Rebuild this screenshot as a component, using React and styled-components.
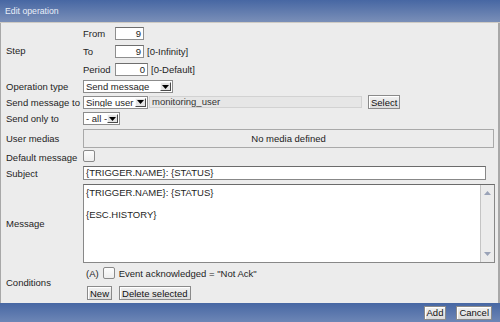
import React from 'react';
import styled, { createGlobalStyle } from 'styled-components';

const Global = createGlobalStyle`
  html, body { margin: 0; padding: 0; background: #ececec; }
  body { font-family: "Liberation Sans", Arial, sans-serif; font-size: 9.5px; color: #1e1e1e; }
`;

const Dialog = styled.div`
  width: 500px;
  height: 322px;
  display: flex;
  flex-direction: column;
  overflow: hidden;
`;

const Header = styled.div`
  height: 22px;
  flex: none;
  display: flex;
  align-items: center;
  padding-left: 5px;
  color: #e9eef8;
  font-size: 8.7px;
  background: linear-gradient(#4767a3, #7a8fb8);
  border-bottom: 1px solid #cfcbc4;
`;

const Body = styled.div`
  flex: 1;
  min-height: 0;
  display: grid;
  grid-template-columns: 82px 1fr;
  align-content: start;
  border-left: 1px solid #a8a8a8;
  border-right: 2px solid #a8a8a8;
  background: #ececec;
`;

const Label = styled.div`
  display: flex;
  align-items: center;
  padding-left: 5px;
  white-space: nowrap;
`;

const Cell = styled.div`
  display: flex;
  align-items: center;
  gap: ${p => p.$gap ?? 3}px;
  padding: ${p => p.$pad ?? '2px 0'};
`;

const StepGrid = styled.div`
  display: grid;
  grid-template-columns: 32px auto;
  grid-auto-rows: 18px;
  align-items: center;
  padding-top: 1px;
`;

const StepItem = styled.div`
  display: flex;
  align-items: center;
  gap: 3px;
`;

const NumInput = styled.div`
  box-sizing: border-box;
  width: ${p => p.$w}px;
  height: 13px;
  border: 1px solid #8e8e8e;
  border-top-color: #6e6e6e;
  background: #fff;
  text-align: right;
  padding-right: 2px;
  line-height: 11px;
`;

const SelectBox = styled.div`
  box-sizing: border-box;
  width: ${p => p.$w}px;
  height: 13px;
  display: flex;
  padding: 1px 1px 1px 0;
  border: 1px solid #8c8c8c;
  background: #fff;
`;

const SelectText = styled.span`
  flex: 1;
  padding-left: 2px;
  line-height: 9px;
  white-space: nowrap;
  overflow: hidden;
`;

const SelectArrow = styled.span`
  box-sizing: border-box;
  width: 11px;
  background: #e4e4e4;
  border: 1px solid;
  border-color: #fafafa #4a4a4a #4a4a4a #fafafa;
  display: flex;
  align-items: center;
  justify-content: center;
`;

const Disabled = styled.div`
  box-sizing: border-box;
  width: 213px;
  height: 12px;
  border: 1px solid #d2d2d2;
  background: #e6e6e6;
  color: #333;
  padding-left: 2px;
  line-height: 10px;
`;

const Button = styled.button`
  box-sizing: border-box;
  height: 14px;
  padding: 0 2px;
  font-family: inherit;
  font-size: 9.5px;
  color: #111;
  background: linear-gradient(#f2f2f2, #dcdcdc);
  border: 1px solid #8a8a8a;
  box-shadow: inset 1px 1px 0 #fff;
  border-radius: 0;
  line-height: 11px;
`;

const MediaBox = styled.div`
  box-sizing: border-box;
  width: 411px;
  height: 19px;
  border: 1px solid #a9a9a9;
  display: flex;
  align-items: center;
  justify-content: center;
  color: #222;
`;

const Check = styled.span`
  box-sizing: border-box;
  width: 12px;
  height: 12px;
  border: 1px solid #8a8a8a;
  border-radius: 2px;
  background: linear-gradient(#fdfdfd, #eeeeee);
  display: inline-block;
`;

const TextInput = styled.div`
  box-sizing: border-box;
  width: 403px;
  height: 14px;
  border: 1px solid #888;
  border-top-color: #6b6b6b;
  background: #fff;
  padding-left: 2px;
  line-height: 12px;
`;

const TextArea = styled.div`
  box-sizing: border-box;
  width: 412px;
  height: 79px;
  border: 1px solid #888;
  border-top-color: #6b6b6b;
  background: #fff;
  display: flex;
`;

const AreaText = styled.div`
  flex: 1;
  padding: 2px 2px;
  line-height: 11px;
`;

const Scrollbar = styled.div`
  width: 13px;
  background: #ececec;
  border-left: 1px solid #c4c4c4;
  display: flex;
  flex-direction: column;
  justify-content: space-between;
  align-items: center;
  padding: 6px 0 6px;
`;

const CondWrap = styled.div`
  display: flex;
  flex-direction: column;
  gap: 7px;
  padding: 2px 0 0 3px;
`;

const CondLine = styled.div`
  display: flex;
  align-items: center;
  gap: 4px;
`;

const ButtonRow = styled.div`
  display: flex;
  gap: 7px;
  padding-left: 1px;
`;

const Footer = styled.div`
  height: 19px;
  flex: none;
  display: flex;
  justify-content: flex-end;
  align-items: center;
  gap: 10px;
  padding-right: 8px;
  background: linear-gradient(#4767a3, #6d86b6);
`;

const Arrow = () => (
  <svg width="7" height="4" viewBox="0 0 7 4"><path d="M0 0h7L3.5 4z" fill="#000" /></svg>
);

function Select({ w, children }) {
  return (
    <SelectBox $w={w}>
      <SelectText>{children}</SelectText>
      <SelectArrow><Arrow /></SelectArrow>
    </SelectBox>
  );
}

export default function App() {
  return (
    <Dialog>
      <Global />
      <Header>Edit operation</Header>
      <Body>
        <Label>Step</Label>
        <StepGrid>
          <span>From</span>
          <StepItem><NumInput $w={29}>9</NumInput></StepItem>
          <span>To</span>
          <StepItem><NumInput $w={29}>9</NumInput>[0-Infinity]</StepItem>
          <span>Period</span>
          <StepItem><NumInput $w={33}>0</NumInput>[0-Default]</StepItem>
        </StepGrid>

        <Label>Operation type</Label>
        <Cell $pad="2px 0 1px"><Select w={90}>Send message</Select></Cell>

        <Label>Send message to</Label>
        <Cell $pad="1px 0" $gap={1}>
          <Select w={65}>Single user</Select>
          <Disabled>monitoring_user</Disabled>
          <Button style={{ marginLeft: 5 }}>Select</Button>
        </Cell>

        <Label>Send only to</Label>
        <Cell><Select w={37}>- all -</Select></Cell>

        <Label>User medias</Label>
        <Cell><MediaBox>No media defined</MediaBox></Cell>

        <Label>Default message</Label>
        <Cell $pad="0 0 2px"><Check /></Cell>

        <Label>Subject</Label>
        <Cell><TextInput>{'{TRIGGER.NAME}: {STATUS}'}</TextInput></Cell>

        <Label>Message</Label>
        <Cell>
          <TextArea>
            <AreaText>
              {'{TRIGGER.NAME}: {STATUS}'}<br /><br />{'{ESC.HISTORY}'}
            </AreaText>
            <Scrollbar>
              <svg width="7" height="4" viewBox="0 0 7 4"><path d="M3.5 0L7 4H0z" fill="#9aa3b8" /></svg>
              <svg width="7" height="4" viewBox="0 0 7 4"><path d="M0 0h7L3.5 4z" fill="#9aa3b8" /></svg>
            </Scrollbar>
          </TextArea>
        </Cell>

        <Label>Conditions</Label>
        <CondWrap>
          <CondLine>(A) <Check /> Event acknowledged = "Not Ack"</CondLine>
          <ButtonRow>
            <Button>New</Button>
            <Button>Delete selected</Button>
          </ButtonRow>
        </CondWrap>
      </Body>
      <Footer>
        <Button>Add</Button>
        <Button>Cancel</Button>
      </Footer>
    </Dialog>
  );
}
